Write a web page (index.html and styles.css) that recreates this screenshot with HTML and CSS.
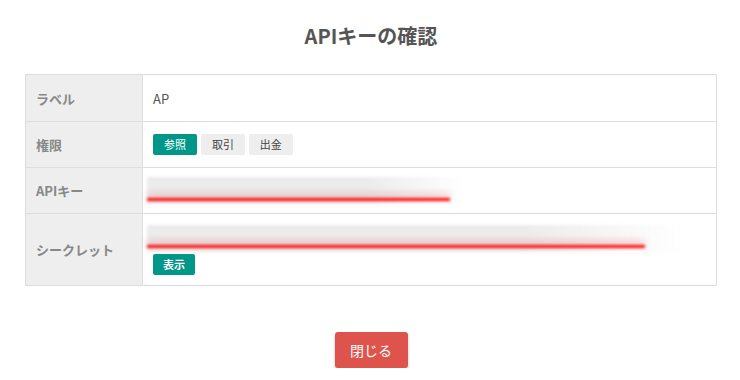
FILE: index.html
```html
<!DOCTYPE html>
<html lang="ja">
<head>
    <meta charset="UTF-8">
    <title>APIキーの確認</title>
    <link rel="stylesheet" href="styles.css">
</head>
<body>
    <h2 class="title">APIキーの確認</h2>

    <table class="key-table">
        <tr class="row-label">
            <th>ラベル</th>
            <td class="value">AP</td>
        </tr>
        <tr class="row-perm">
            <th>権限</th>
            <td>
                <span class="badge on">参照</span>
                <span class="badge">取引</span>
                <span class="badge">出金</span>
            </td>
        </tr>
        <tr class="row-key">
            <th>APIキー</th>
            <td>
                <div class="masked short"><div class="strike"></div></div>
            </td>
        </tr>
        <tr class="row-secret">
            <th>シークレット</th>
            <td>
                <div class="masked long"><div class="strike"></div></div>
                <button class="show-btn">表示</button>
            </td>
        </tr>
    </table>

    <div class="footer">
        <button class="close-btn">閉じる</button>
    </div>
</body>
</html>
```

FILE: styles.css
```css
body {
    margin: 0;
    padding: 0 23px 0 25px;
    font-family: "Noto Sans CJK JP", "Noto Sans", sans-serif;
    background: #fff;
    color: #555;
}
.title {
    margin: 0 0 22px;
    padding-top: 22px;
    height: 52px;
    box-sizing: border-box;
    text-align: center;
    font-size: 20px;
    line-height: 28px;
    font-weight: bold;
    color: #555;
}
.key-table {
    width: 100%;
    border-collapse: collapse;
    border: 1px solid #ddd;
}
.key-table th,
.key-table td {
    border: 1px solid #ddd;
    padding: 0 10px;
    font-size: 13px;
    vertical-align: middle;
}
.key-table th {
    width: 96px;
    background: #eee;
    color: #888;
    text-align: left;
    font-weight: bold;
}
.row-label { height: 47px; }
.row-perm { height: 46px; }
.row-key { height: 46px; }
.row-secret { height: 72px; }
.value {
    font-size: 14px;
    color: #555;
}
.badge {
    display: inline-block;
    padding: 0 11px;
    height: 21px;
    line-height: 21px;
    font-size: 11px;
    background: #eee;
    color: #444;
    border-radius: 2px;
    margin-right: 1px;
}
.badge.on {
    background: #009688;
    color: #fff;
}
.masked {
    height: 27px;
    margin-left: -6px;
    display: flex;
    flex-direction: column;
    justify-content: flex-end;
    background: linear-gradient(to right, #ececec 70%, rgba(236, 236, 236, 0));
    filter: blur(1.5px);
}
.masked.short { width: 318px; }
.masked.long { width: 538px; }
.strike {
    height: 3px;
    margin-bottom: 3px;
    background: #ff0000;
    box-shadow: 0 -4px 6px rgba(200, 40, 40, 0.35);
}
.masked.short .strike { width: 303px; }
.masked.long .strike { width: 498px; margin-bottom: 4px; }
.show-btn {
    display: block;
    margin-top: 2px;
    height: 21px;
    padding: 0 10px;
    border: none;
    border-radius: 2px;
    background: #009688;
    color: #fff;
    font-family: inherit;
    font-size: 11px;
    font-weight: bold;
}
.footer {
    text-align: center;
    padding-top: 46px;
}
.close-btn {
    height: 36px;
    width: 73px;
    border: none;
    border-radius: 3px;
    background: #de544c;
    color: #fff;
    font-family: inherit;
    font-size: 14px;
    box-shadow: 0 2px 3px rgba(0, 0, 0, 0.25);
    cursor: pointer;
}
```
